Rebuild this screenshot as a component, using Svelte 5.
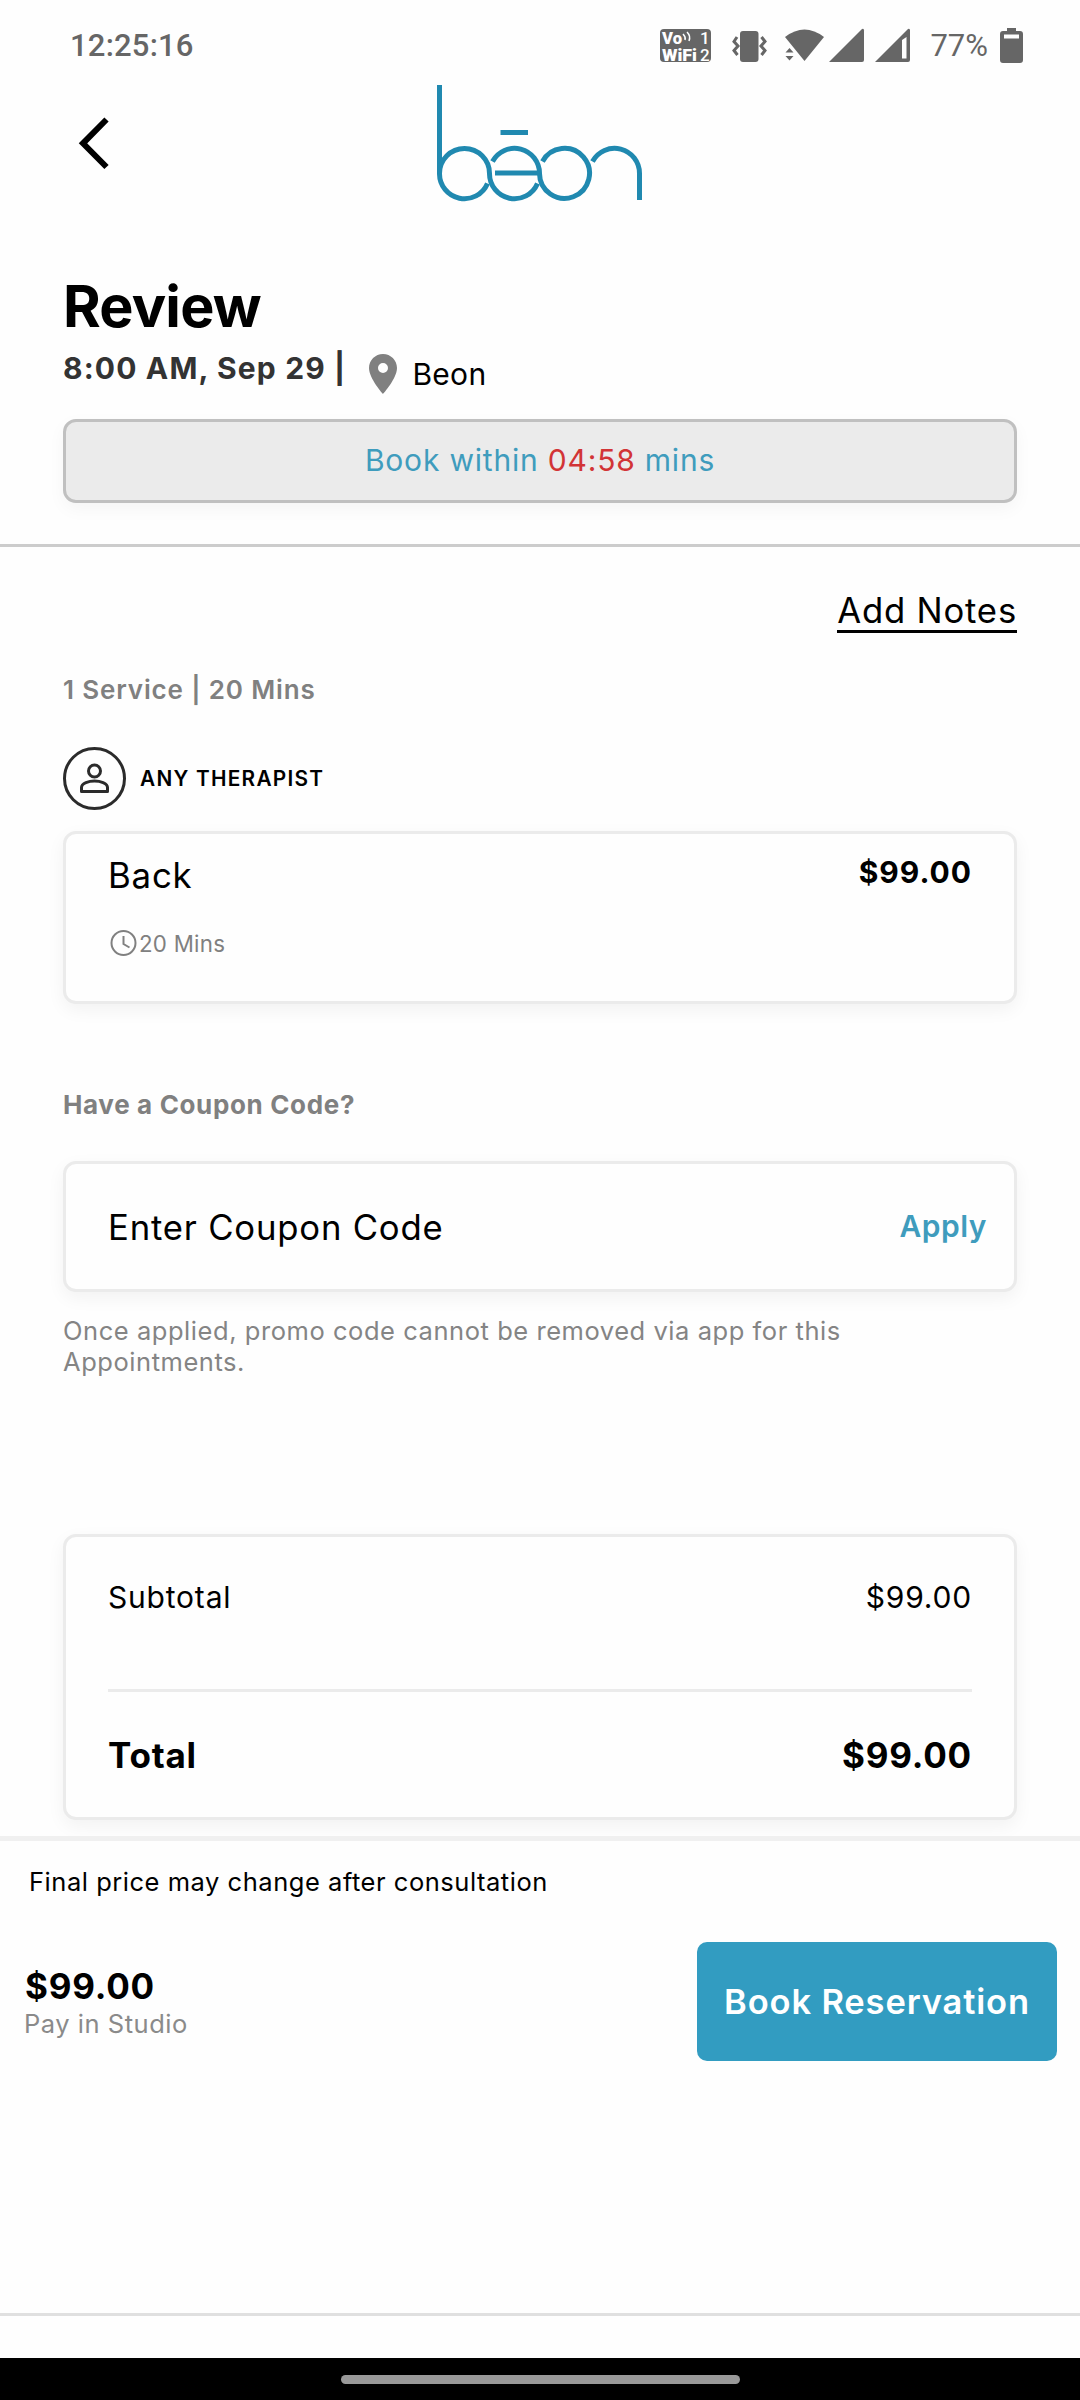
<style>
	:global(body) {
		margin: 0;
		background-color: #fefefe;
	}

	.screen {
		width: 1080px;
		height: 2400px;
		display: flex;
		flex-direction: column;
		font-family: Inter, "Liberation Sans", sans-serif;
		font-size: 30px;
		letter-spacing: 0.8px;
		color: #000;
		background-color: #fefefe;
		overflow: hidden;
	}

	svg {
		display: block;
		flex: none;
	}

	.status {
		height: 80px;
		padding: 11px 57px 0 70px;
		box-sizing: border-box;
		display: flex;
		align-items: center;
		justify-content: space-between;
		font-family: Roboto, sans-serif;
		font-size: 31px;
		line-height: 40px;
		color: #666;
	}

	.status__time {
		font-weight: 500;
		letter-spacing: 0.2px;
	}

	.status__right {
		display: flex;
		align-items: center;
	}

	.status__battery {
		margin: 0 12px 0 19px;
		letter-spacing: 0;
	}

	.header {
		height: 134px;
		padding-left: 78px;
		display: flex;
		align-items: flex-start;
	}

	.header__back {
		margin-top: 36px;
	}

	.header__logo {
		margin: 4px 0 0 327px;
	}

	.summary {
		height: 333px;
		padding: 57px 63px 0;
		box-sizing: border-box;
		border-bottom: 3px solid #ccc;
	}

	h1 {
		margin: 0;
		font-size: 57.5px;
		font-weight: 700;
		line-height: 70px;
		letter-spacing: -0.8px;
	}

	.summary__row {
		height: 78px;
		display: flex;
	}

	.summary__date {
		font-weight: 700;
		line-height: 54px;
		letter-spacing: 1.15px;
		color: #333;
	}

	.summary__pin {
		margin: 13px 15px 0 23px;
	}

	.summary__place {
		line-height: 66px;
		letter-spacing: 0.3px;
	}

	.timer {
		height: 84px;
		box-sizing: border-box;
		border: 3px solid #c0c0c0;
		border-radius: 13px;
		background-color: #ebebeb;
		box-shadow: 0 6px 18px rgba(0, 0, 0, 0.04);
		text-align: center;
		line-height: 77px;
		color: #3f9cbd;
	}

	.timer__left {
		color: #d23436;
	}

	.details {
		height: 1289px;
		padding: 41px 63px 0;
		box-sizing: border-box;
	}

	.notes {
		width: fit-content;
		height: 42px;
		margin-left: auto;
		border-bottom: 3px solid #000;
		font-size: 34.7px;
		line-height: 44px;
	}

	.caption {
		margin: 0;
		font-size: 26px;
		font-weight: 600;
		line-height: 40px;
		letter-spacing: 0.85px;
		color: #808080;
	}

	.caption--service {
		margin-top: 37px;
	}

	.therapist {
		height: 64px;
		margin-top: 36px;
		display: flex;
		align-items: center;
		gap: 14px;
		font-size: 20.8px;
		font-weight: 600;
		letter-spacing: 1.25px;
	}

	.card {
		box-sizing: border-box;
		border: 3px solid #ebebeb;
		border-radius: 13px;
		background-color: #fefefe;
		box-shadow: 0 6px 18px rgba(0, 0, 0, 0.05);
	}

	.service {
		height: 173px;
		margin-top: 21px;
		padding: 18px 42px 0;
	}

	.service__head {
		display: flex;
		justify-content: space-between;
		font-size: 34.8px;
		line-height: 46px;
	}

	.service__price {
		font-size: 30px;
		font-weight: 700;
		line-height: 40px;
		letter-spacing: 1px;
	}

	.service__time {
		height: 30px;
		margin-top: 30px;
		display: flex;
		align-items: center;
		gap: 2px;
		font-size: 22.3px;
		letter-spacing: 0.25px;
		color: #808080;
	}

	.caption--coupon {
		margin-top: 81px;
		font-weight: 700;
		letter-spacing: 0.65px;
	}

	.coupon {
		height: 131px;
		margin-top: 36px;
		padding: 0 27px 0 42px;
		display: flex;
		align-items: center;
		justify-content: space-between;
		font-size: 34.7px;
	}

	.coupon__apply {
		padding-bottom: 2px;
		font-size: 30px;
		font-weight: 600;
		letter-spacing: 0.5px;
		color: #3f9cbd;
	}

	.hint {
		width: 860px;
		margin: 23px 0 0;
		font-size: 25.5px;
		line-height: 31px;
		letter-spacing: 0.55px;
		color: #848484;
	}

	.totals {
		height: 286px;
		margin-top: 157px;
		padding: 40px 42px 0;
	}

	.totals__row {
		height: 112px;
		box-sizing: border-box;
		display: flex;
		justify-content: space-between;
		line-height: 40px;
	}

	.totals__row--sum {
		padding-top: 43px;
		border-top: 3px solid #ebebeb;
		font-size: 35px;
		font-weight: 700;
	}

	.footer {
		flex: 1;
		padding: 26px 23px 0 24px;
		border-top: 5px solid #f0f0f0;
	}

	.footer__note {
		padding-left: 5px;
		font-size: 25.5px;
		line-height: 30px;
		letter-spacing: 0.53px;
	}

	.footer__row {
		height: 119px;
		margin-top: 45px;
		display: flex;
		justify-content: space-between;
	}

	.footer__price {
		padding: 23px 0 0 1px;
		font-size: 35px;
		font-weight: 700;
		line-height: 42px;
	}

	.footer__pay {
		font-size: 25.5px;
		line-height: 33px;
		letter-spacing: 0.53px;
		color: #8a8a8a;
	}

	button {
		width: 360px;
		padding: 0;
		border: 0;
		border-radius: 10px;
		background-color: #329cc1;
		color: #fff;
		font: 600 34.5px/46px Inter, "Liberation Sans", sans-serif;
		letter-spacing: 0.85px;
	}

	.tabs {
		height: 42px;
		border-top: 3px solid #e0e0e0;
	}

	.gestures {
		height: 42px;
		padding-top: 17px;
		box-sizing: border-box;
		background-color: #000;
	}

	.gestures__pill {
		width: 399px;
		height: 9px;
		margin: 0 auto;
		border-radius: 5px;
		background-color: #999;
	}
</style>

<script>
	export let time = "12:25:16";
	export let battery = 77;
	export let date = "8:00 AM, Sep 29";
	export let place = "Beon";
	export let timeLeft = "04:58";
	export let therapist = "ANY THERAPIST";
	export let service = { name: "Back", mins: 20, price: 99 };

	$: price = "$" + service.price.toFixed(2);
</script>

<div class="screen">
	<div class="status">
		<span class="status__time">{time}</span>
		<div class="status__right">
			<!-- vowifi, vibrate, wifi and both sims in one strip -->
			<svg width="251" height="35" viewBox="0 0 251 35" fill="#666">
				<rect x="0" y="1" width="51" height="33" rx="4" />
				<g fill="#fff" font-family="Roboto, sans-serif" font-weight="900" font-size="17" letter-spacing="0">
					<text x="2" y="16" textLength="20" lengthAdjust="spacingAndGlyphs">Vo</text>
					<text x="2" y="32.500" textLength="35" lengthAdjust="spacingAndGlyphs">WiFi</text>
					<text x="40" y="16" font-weight="500">1</text>
					<text x="40" y="32.500" font-weight="500">2</text>
				</g>
				<path d="M23 6q3 3 2 6M27 4q4 4 2 9" fill="none" stroke="#fff" stroke-width="1.500" />
				<rect x="80" y="3" width="18.500" height="31" rx="3" />
				<path
					d="M77 9l-3 4.500 4 4.500-4 4.500 3.500 4.500M101.500 9l3.500 4.500-4 4.500 4 4.500-3.500 4.500"
					fill="none"
					stroke="#666"
					stroke-width="3" />
				<path d="M125 9Q144.500-6 164 9L144.500 33z" />
				<path d="M125.500 24.500l4-4.500 4 4.500zM125.500 28l4 4.500 4-4.500z" />
				<path d="M169 34L202 1q2-1 2 1.500V32q0 2-2 2z" />
				<path d="M215 34L248 1q2-1 2 1.500V32q0 2-2 2zM242 12v18.500h4.500V9z" fill-rule="evenodd" />
			</svg>
			<span class="status__battery">{battery}%</span>
			<svg width="23" height="35" viewBox="0 0 23 35" fill="#666">
				<path
					d="M7 0h9v3h4q3 0 3 3v26q0 3-3 3H3q-3 0-3-3V6q0-3 3-3h4zM4 6.500v4h15v-4z"
					fill-rule="evenodd" />
			</svg>
		</div>
	</div>

	<div class="header">
		<svg class="header__back" width="32" height="54" viewBox="0 0 32 54">
			<path d="M28.500 3.500L5 27.300 28.500 51" fill="none" stroke="#000" stroke-width="6" />
		</svg>
		<svg
			class="header__logo"
			width="208"
			height="120"
			viewBox="0 0 208 120"
			fill="none"
			stroke="#2089b0"
			stroke-width="5">
			<path d="M2.500 1V90" />
			<path d="M2.500 89.500A25 25 0 0 1 52.500 89.500A25 25 0 0 0 100.500 99.500" />
			<path d="M2.500 89.500A25 25 0 0 0 50.500 99.500" />
			<path d="M55.500 77.500A25 25 0 0 1 102.500 89.500A25 25 0 1 0 105.500 77.500" />
			<path d="M58 89H102M63.500 48.500H91" />
			<path d="M155.500 77.500A25 25 0 0 1 202.500 89.500V116" />
		</svg>
	</div>

	<div class="summary">
		<h1>Review</h1>
		<div class="summary__row">
			<span class="summary__date">{date} |</span>
			<svg class="summary__pin" width="28" height="40" viewBox="5 2 14 20">
				<path
					fill="#808080"
					d="M12 2C8.130 2 5 5.130 5 9c0 5.250 7 13 7 13s7-7.750 7-13c0-3.870-3.130-7-7-7zm0 9.500a2.500 2.500 0 0 1 0-5 2.500 2.500 0 0 1 0 5z" />
			</svg>
			<span class="summary__place">{place}</span>
		</div>
		<div class="timer">
			Book within <span class="timer__left">{timeLeft}</span> mins
		</div>
	</div>

	<div class="details">
		<div class="notes">Add Notes</div>
		<p class="caption caption--service">1 Service | {service.mins} Mins</p>
		<div class="therapist">
			<svg width="63" height="63" viewBox="0 0 63 63" fill="none" stroke="#2b2b2b" stroke-width="3">
				<circle cx="31.500" cy="31.500" r="30" />
				<circle cx="31.500" cy="24" r="6" />
				<path d="M18.500 44.500V40.500C18.500 36 26 34 31.500 34S44.500 36 44.500 40.500V44.500Z" stroke-linejoin="round" />
			</svg>
			<span>{therapist}</span>
		</div>
		<div class="card service">
			<div class="service__head">
				<span>{service.name}</span>
				<span class="service__price">{price}</span>
			</div>
			<div class="service__time">
				<svg width="29" height="28" viewBox="0 0 29 28" fill="none" stroke="#808080" stroke-width="2">
					<circle cx="15.500" cy="14" r="12" />
					<path d="M15.500 7V15L21.500 18.500" />
				</svg>
				<span>{service.mins} Mins</span>
			</div>
		</div>
		<p class="caption caption--coupon">Have a Coupon Code?</p>
		<div class="card coupon">
			<span>Enter Coupon Code</span>
			<span class="coupon__apply">Apply</span>
		</div>
		<p class="hint">Once applied, promo code cannot be removed via app for this Appointments.</p>
		<div class="card totals">
			<div class="totals__row">
				<span>Subtotal</span>
				<span>{price}</span>
			</div>
			<div class="totals__row totals__row--sum">
				<span>Total</span>
				<span>{price}</span>
			</div>
		</div>
	</div>

	<div class="footer">
		<div class="footer__note">Final price may change after consultation</div>
		<div class="footer__row">
			<div>
				<div class="footer__price">{price}</div>
				<div class="footer__pay">Pay in Studio</div>
			</div>
			<button>Book Reservation</button>
		</div>
	</div>

	<div class="tabs"></div>
	<div class="gestures">
		<div class="gestures__pill"></div>
	</div>
</div>
